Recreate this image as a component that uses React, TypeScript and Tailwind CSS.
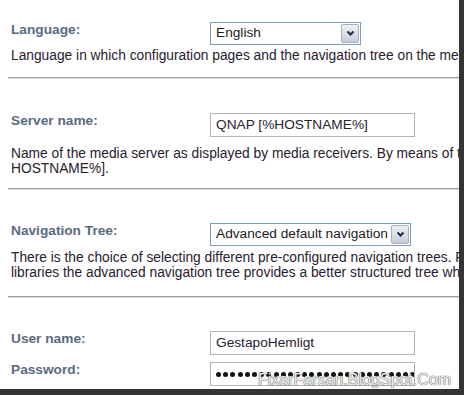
const font = "font-['Liberation_Sans',Arial,sans-serif]";

function Chevron() {
  return (
    <svg width="9" height="7" viewBox="0 0 9 7" aria-hidden>
      <path d="M1.5 1.5 L4.5 4.5 L7.5 1.5" fill="none" stroke="#1d2a4d" strokeWidth="2" />
    </svg>
  );
}

function SelectBox({ value, width }: { value: string; width: string }) {
  return (
    <div className={`${width} h-[23px] border border-[#7f9db9] bg-white flex items-center justify-between pl-[5px] pr-[1px]`}>
      <span className="text-[#1f1a24] whitespace-nowrap">{value}</span>
      <span className="w-[18px] h-[19px] rounded-[2px] border border-[#a7afc0] bg-gradient-to-b from-[#eef0f5] to-[#c6ccd9] flex items-center justify-center">
        <Chevron />
      </span>
    </div>
  );
}

function TextBox({ children }: { children: React.ReactNode }) {
  return (
    <div className="w-[205px] h-[24px] border border-[#b4b4b4] bg-white flex items-center pl-[5px] overflow-hidden text-[#2a2030] whitespace-nowrap">
      {children}
    </div>
  );
}

function Row({ label, children }: { label: string; children: React.ReactNode }) {
  return (
    <div className="flex items-start">
      <div className="w-[199px] font-bold text-[#5a6a80] leading-[16px]">{label}</div>
      {children}
    </div>
  );
}

function Rule({ className }: { className: string }) {
  return <div className={`-ml-[3px] h-[2px] border-t border-[#9e9e9e] bg-[#dcdcdc] ${className}`} />;
}

function Desc({ lines, className }: { lines: string[]; className: string }) {
  return (
    <div className={`text-[13.78px] leading-[15px] text-[#2b2030] ${className}`}>
      {lines.map((l) => (
        <div key={l} className="whitespace-nowrap">
          {l}
        </div>
      ))}
    </div>
  );
}

export default function App() {
  const dots = Array.from({ length: 28 });
  return (
    <div className="w-[464px] h-[395px] bg-[#343434]">
      <div className={`relative w-[459px] h-[389px] bg-white overflow-hidden ${font} text-[13.7px]`}>
        <div className="pl-[11px] pt-[22px]">
          {/* Language */}
          <Row label="Language:">
            <SelectBox value="English" width="w-[151px]" />
          </Row>
          <Desc
            className="mt-[3px]"
            lines={["Language in which configuration pages and the navigation tree on the media server are displayed."]}
          />
          <Rule className="mt-[14px]" />

          {/* Server name */}
          <div className="mt-[34px]">
            <Row label="Server name:">
              <TextBox>QNAP [%HOSTNAME%]</TextBox>
            </Row>
          </div>
          <Desc
            className="mt-[9px]"
            lines={["Name of the media server as displayed by media receivers. By means of the wildcard [%", "HOSTNAME%]."]}
          />
          <Rule className="mt-[12px]" />

          {/* Navigation tree */}
          <div className="mt-[33px]">
            <Row label="Navigation Tree:">
              <SelectBox value="Advanced default navigation" width="w-[201px]" />
            </Row>
          </div>
          <Desc
            className="mt-[4px]"
            lines={[
              "There is the choice of selecting different pre-configured navigation trees. For large",
              "libraries the advanced navigation tree provides a better structured tree which is faster.",
            ]}
          />
          <Rule className="mt-[16px]" />

          {/* Credentials */}
          <div className="mt-[33px] flex flex-col gap-[7px]">
            <Row label="User name:">
              <TextBox>GestapoHemligt</TextBox>
            </Row>
            <Row label="Password:">
              <TextBox>
                <div className="flex gap-[2.2px]">
                  {dots.map((_, i) => (
                    <span key={i} className="w-[5px] h-[5px] rounded-full bg-[#111] shrink-0" />
                  ))}
                </div>
              </TextBox>
            </Row>
          </div>
        </div>

        {/* watermark */}
        <div className="absolute left-[258px] top-[372px] text-[16px] leading-none text-[#ececec] whitespace-nowrap [text-shadow:0_0_1px_#555,0_0_1px_#555]">
          FixarFarsan.BlogSpot.Com
        </div>
      </div>
    </div>
  );
}
